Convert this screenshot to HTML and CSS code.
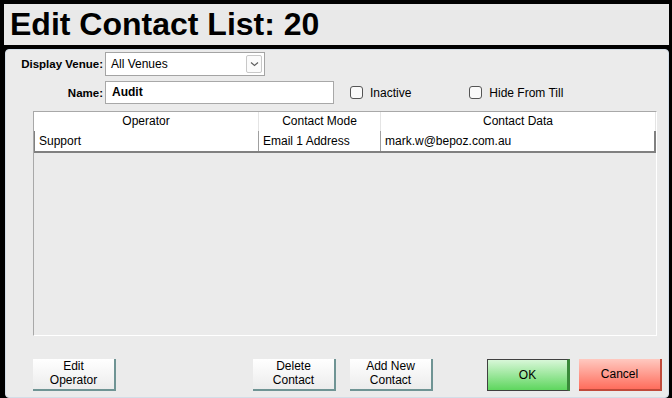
FILE: index.html
```html
<html>
    <head>
        <title>Edit Contact List</title>
        <link rel="stylesheet" href="styles.css">
    </head>
    <body>
        <div class="window">
            <div class="titlebar">
                <h1>Edit Contact List: 20</h1>
            </div>
            <div class="panel">
                <div class="row row-venue">
                    <label class="lbl">Display Venue:</label>
                    <div class="select">
                        <span class="select-text">All Venues</span>
                        <span class="drop">
                            <svg width="9" height="6" viewBox="0 0 9 6"><path d="M1 1.5 L4.5 4.5 L8 1.5" fill="none" stroke="#606060" stroke-width="1.2"/></svg>
                        </span>
                    </div>
                </div>
                <div class="row row-name">
                    <label class="lbl">Name:</label>
                    <div class="textbox">Audit</div>
                    <div class="check check-inactive"><span class="box"></span>Inactive</div>
                    <div class="check check-hide"><span class="box"></span>Hide From Till</div>
                </div>
                <div class="grid">
                    <div class="grid-head">
                        <div class="cell c1">Operator</div>
                        <div class="cell c2">Contact Mode</div>
                        <div class="cell c3">Contact Data</div>
                    </div>
                    <div class="grid-row">
                        <div class="cell c1">Support</div>
                        <div class="cell c2">Email 1 Address</div>
                        <div class="cell c3">mark.w@bepoz.com.au</div>
                    </div>
                </div>
                <div class="buttons">
                    <button class="btn btn-edit">Edit<br/>Operator</button>
                    <button class="btn btn-delete">Delete<br/>Contact</button>
                    <button class="btn btn-add">Add New<br/>Contact</button>
                    <button class="btn btn-ok">OK</button>
                    <button class="btn btn-cancel">Cancel</button>
                </div>
            </div>
        </div>
    </body>
</html>
```

FILE: styles.css
```css
body {margin:0;background:#000;font-family:"Liberation Sans", Arial, sans-serif;font-size:12px;color:#000;}
.window {width:672px;height:398px;background:#000;padding:4px 3px 0 4px;box-sizing:border-box;overflow:hidden;}
.titlebar {height:41px;background:#e9e9e9;display:flex;align-items:center;}
.titlebar h1 {margin:0 0 0 6px;font-size:32px;font-weight:bold;letter-spacing:0;}
.panel {margin:4px 0 0 1px;height:349px;background:#ebebeb;border:1px solid #d3dde7;border-radius:4px;box-sizing:border-box;}

.row {display:flex;align-items:center;}
.lbl {width:97px;text-align:right;font-weight:bold;font-size:11.5px;margin-right:2px;}
.row-venue {margin-top:2px;height:24px;}
.row-name {margin-top:5px;height:23px;}

.select {width:160px;height:24px;background:#fff;border:1px solid #a4a4a4;box-sizing:border-box;display:flex;align-items:center;justify-content:space-between;}
.select-text {padding-left:5px;}
.drop {width:16px;height:18px;margin-right:2px;border:1px solid #c8c8c8;border-radius:2px;box-sizing:border-box;display:flex;align-items:center;justify-content:center;background:#fbfbfb;}

.textbox {width:229px;height:23px;background:#fff;border:1px solid #a8a8a8;box-sizing:border-box;font-weight:bold;font-size:12px;padding-left:6px;line-height:21px;}
.check {display:flex;align-items:center;}
.check .box {width:11px;height:11px;border:1px solid #555;border-radius:3px;background:#fafafa;margin-right:7px;}
.check-inactive {margin-left:16px;}
.check-hide {margin-left:58px;}

.grid {margin:7px 0 0 27px;width:624px;height:225px;border-top:1px solid #a8a8a8;border-left:1px solid #a8a8a8;border-right:1px solid #fff;border-bottom:1px solid #fff;box-sizing:border-box;}
.grid-head, .grid-row {display:flex;background:#fff;}
.grid-head {height:19px;}
.grid-head .cell {text-align:center;line-height:19px;border-right:1px solid #e4e4e4;}
.grid-row {height:22px;border-left:1px solid #808080;border-bottom:2px solid #808080;border-right:2px solid #808080;box-sizing:border-box;}
.grid-row .cell {line-height:20px;padding-left:4px;box-sizing:border-box;border-right:1px solid #a0a0a0;}
.grid-row .c3 {border-right:none;}
.cell {box-sizing:border-box;white-space:nowrap;}
.c1 {width:225px;}
.c2 {width:122px;}
.c3 {flex:1;}
.grid-row .c1 {width:224px;}

.buttons {display:flex;margin:23px 0 0 27px;}
.btn {width:83px;height:32px;font-family:"Liberation Sans", Arial, sans-serif;font-size:12px;line-height:14px;padding:0 0 6px 0;border:none;border-right:2px solid #6f9494;border-bottom:2px solid #6f9494;background:linear-gradient(#ffffff, #ececec);color:#000;}
.btn-delete {margin-left:137px;}
.btn-add {margin-left:14px;}
.btn-ok {margin-left:54px;border:1px solid #404040;border-right:3px solid #3a8a3a;background:linear-gradient(#d8f7d8, #5ed65e);padding:0;}
.btn-cancel {margin-left:9px;border-right:2px solid #c04a3a;border-bottom:2px solid #c04a3a;background:linear-gradient(#ffc9c0, #ff6d5c);padding:0;}
```
